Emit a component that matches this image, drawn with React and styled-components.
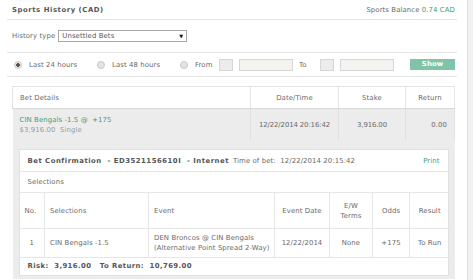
import React from 'react'
import styled, { createGlobalStyle } from 'styled-components'

const Global = createGlobalStyle`
  html, body {
    margin: 0;
    padding: 0;
    background: #fff;
    overflow: hidden;
  }
  body {
    font-family: "DejaVu Sans", Verdana, sans-serif;
    font-size: 6.9px;
    letter-spacing: 0.1px;
    color: #6a6a6a;
  }
`

const Page = styled.div`
  display: flex;
  width: 473px;
  height: 280px;
  overflow: hidden;
`

const Main = styled.div`
  flex: 1;
  padding: 0 10px 0 7px;
`

const Track = styled.div`
  width: 6px;
  background: #f1f1f1;
  border-left: 1px solid #dcdcdc;
`

const Header = styled.div`
  display: flex;
  justify-content: space-between;
  align-items: center;
  height: 19px;
  padding: 0 2px 0 5px;
  border-bottom: 1px solid #e4e4e4;
`

const Title = styled.div`
  font-weight: bold;
  letter-spacing: 0.55px;
  color: #555;
`

const Green = styled.span`
  color: #3d9b7c;
`

const TypeRow = styled.div`
  display: flex;
  align-items: center;
  height: 32px;
  padding-left: 5px;
  gap: 3px;
  border-bottom: 1px solid #e4e4e4;
`

const Select = styled.div`
  display: flex;
  justify-content: space-between;
  align-items: center;
  width: 121px;
  height: 10px;
  padding: 0 3px;
  border: 1px solid #a8a8a8;
  color: #555;
`

const Arrow = styled.span`
  color: #111;
  font-size: 5px;
`

const RangeRow = styled.div`
  display: flex;
  align-items: center;
  height: 23px;
  padding-left: 7px;
  border-bottom: 1px solid #e4e4e4;
`

const Radio = styled.span`
  width: 6px;
  height: 6px;
  border-radius: 50%;
  border: 1px solid #c9c9c9;
  background: ${p => (p.on ? 'radial-gradient(circle, #555 0 1.6px, #e6e6e6 2px)' : '#e3e3e3')};
  margin-right: 7px;
`

const Option = styled.span`
  width: ${p => p.w}px;
  padding-left: ${p => p.pl || 0}px;
`

const Small = styled.span`
  width: 12px;
  height: 10px;
  background: #ececec;
  border: 1px solid #d6d6d6;
  margin-right: 6px;
`

const Field = styled.span`
  width: 52px;
  height: 10px;
  background: #f3f3f0;
  border: 1px solid #d6d6d6;
`

const ShowBtn = styled.span`
  margin-left: auto;
  margin-right: 2px;
  width: 45px;
  height: 11px;
  line-height: 11px;
  background: #7fc3a9;
  color: #fff;
  font-weight: bold;
  text-align: center;
`

const Bets = styled.table`
  margin: 9px 2px 0 5px;
  width: 442px;
  border-collapse: collapse;
  table-layout: fixed;
`

const Th = styled.th`
  height: 21px;
  padding: 0 7px;
  font-weight: normal;
  text-align: ${p => p.align || 'center'};
  border: 1px solid #e4e4e4;
  border-bottom: 1px solid #d8d8d8;
`

const Td = styled.td`
  background: #ececec;
  height: 32px;
  padding: 0 ${p => p.pr ?? 7}px 0 ${p => p.pl ?? 7}px;
  text-align: ${p => p.align || 'center'};
  border-right: 1px solid #e2e2e2;
  line-height: 10px;
  white-space: nowrap;
  letter-spacing: ${p => (p.tight ? '-0.1px' : 'inherit')};
`

const Sub = styled.span`
  color: #9a9a9a;
`

const DetailCell = styled.td`
  background: #ececec;
  padding: 8px 6px 3px 6px;
`

const Box = styled.div`
  background: #fff;
  border: 1px solid #e0e0e0;
`

const BoxHead = styled.div`
  display: flex;
  align-items: center;
  height: 21px;
  padding: 0 8px 0 8px;
  border-bottom: 1px solid #e6e6e6;
  white-space: nowrap;
`

const Bold = styled.span`
  font-weight: bold;
  letter-spacing: 0.5px;
  color: #555;
  margin-right: ${p => p.mr || 0}px;
`

const Print = styled(Green)`
  margin-left: auto;
`

const BoxLine = styled.div`
  height: 20px;
  line-height: 20px;
  padding: 0 8px;
  border-bottom: 1px solid #e6e6e6;
`

const Sel = styled.table`
  width: 100%;
  border-collapse: collapse;
  table-layout: fixed;
`

const STh = styled.th`
  height: 35px;
  font-weight: normal;
  text-align: ${p => p.align || 'center'};
  padding: 0 5px;
  border-right: 1px solid #e6e6e6;
  border-bottom: 1px solid #e6e6e6;
  line-height: 10px;
  white-space: nowrap;
  &:last-child { border-right: none; }
`

const STd = styled.td`
  height: 28px;
  text-align: ${p => p.align || 'center'};
  padding: 0 5px;
  border-right: 1px solid #e6e6e6;
  border-bottom: 1px solid #e6e6e6;
  line-height: 10px;
  white-space: nowrap;
  &:last-child { border-right: none; }
`

const Footer = styled.div`
  height: 17px;
  line-height: 17px;
  padding: 0 8px;
  font-weight: bold;
  letter-spacing: 0.4px;
  color: #555;
`

export default function App() {
  return (
    <Page>
      <Global />
      <Main>
        <Header>
          <Title>Sports History (CAD)</Title>
          <div>
            Sports Balance <Green>0.74 CAD</Green>
          </div>
        </Header>

        <TypeRow>
          History type
          <Select>
            Unsettled Bets <Arrow>▼</Arrow>
          </Select>
        </TypeRow>

        <RangeRow>
          <Radio on />
          <Option w={68}>Last 24 hours</Option>
          <Radio />
          <Option w={68}>Last 48 hours</Option>
          <Radio />
          <Option w={24}>From</Option>
          <Small />
          <Field />
          <Option w={21} pl={6}>To</Option>
          <Small />
          <Field />
          <ShowBtn>Show</ShowBtn>
        </RangeRow>

        <Bets>
          <colgroup>
            <col style={{ width: 238 }} />
            <col style={{ width: 88 }} />
            <col style={{ width: 67 }} />
            <col style={{ width: 49 }} />
          </colgroup>
          <thead>
            <tr>
              <Th align="left">Bet Details</Th>
              <Th>Date/Time</Th>
              <Th>Stake</Th>
              <Th>Return</Th>
            </tr>
          </thead>
          <tbody>
            <tr>
              <Td align="left">
                <Green>CIN Bengals -1.5 @&nbsp; +175</Green>
                <br />
                <Sub>$3,916.00&nbsp; Single</Sub>
              </Td>
              <Td pl={0} pr={0} tight>12/22/2014 20:16:42</Td>
              <Td pl={4} pr={4} tight>3,916.00</Td>
              <Td align="right">0.00</Td>
            </tr>
            <tr>
              <DetailCell colSpan={4}>
                <Box>
                  <BoxHead>
                    <Bold mr={4}>Bet Confirmation&nbsp; - ED3521156610I&nbsp; - Internet</Bold>
                    Time of bet:&nbsp; 12/22/2014 20:15:42
                    <Print>Print</Print>
                  </BoxHead>
                  <BoxLine>Selections</BoxLine>
                  <Sel>
                    <colgroup>
                      <col style={{ width: 25 }} />
                      <col style={{ width: 104 }} />
                      <col style={{ width: 126 }} />
                      <col style={{ width: 55 }} />
                      <col style={{ width: 43 }} />
                      <col style={{ width: 37 }} />
                      <col style={{ width: 40 }} />
                    </colgroup>
                    <thead>
                      <tr>
                        <STh align="left">No.</STh>
                        <STh align="left">Selections</STh>
                        <STh align="left">Event</STh>
                        <STh>Event Date</STh>
                        <STh>E/W<br />Terms</STh>
                        <STh>Odds</STh>
                        <STh>Result</STh>
                      </tr>
                    </thead>
                    <tbody>
                      <tr>
                        <STd>1</STd>
                        <STd align="left">CIN Bengals -1.5</STd>
                        <STd align="left">
                          DEN Broncos @ CIN Bengals
                          <br />
                          (Alternative Point Spread 2-Way)
                        </STd>
                        <STd>12/22/2014</STd>
                        <STd>None</STd>
                        <STd>+175</STd>
                        <STd>To Run</STd>
                      </tr>
                    </tbody>
                  </Sel>
                  <Footer>Risk:&nbsp; 3,916.00&nbsp;&nbsp; To Return:&nbsp; 10,769.00</Footer>
                </Box>
              </DetailCell>
            </tr>
          </tbody>
        </Bets>
      </Main>
      <Track />
    </Page>
  )
}
